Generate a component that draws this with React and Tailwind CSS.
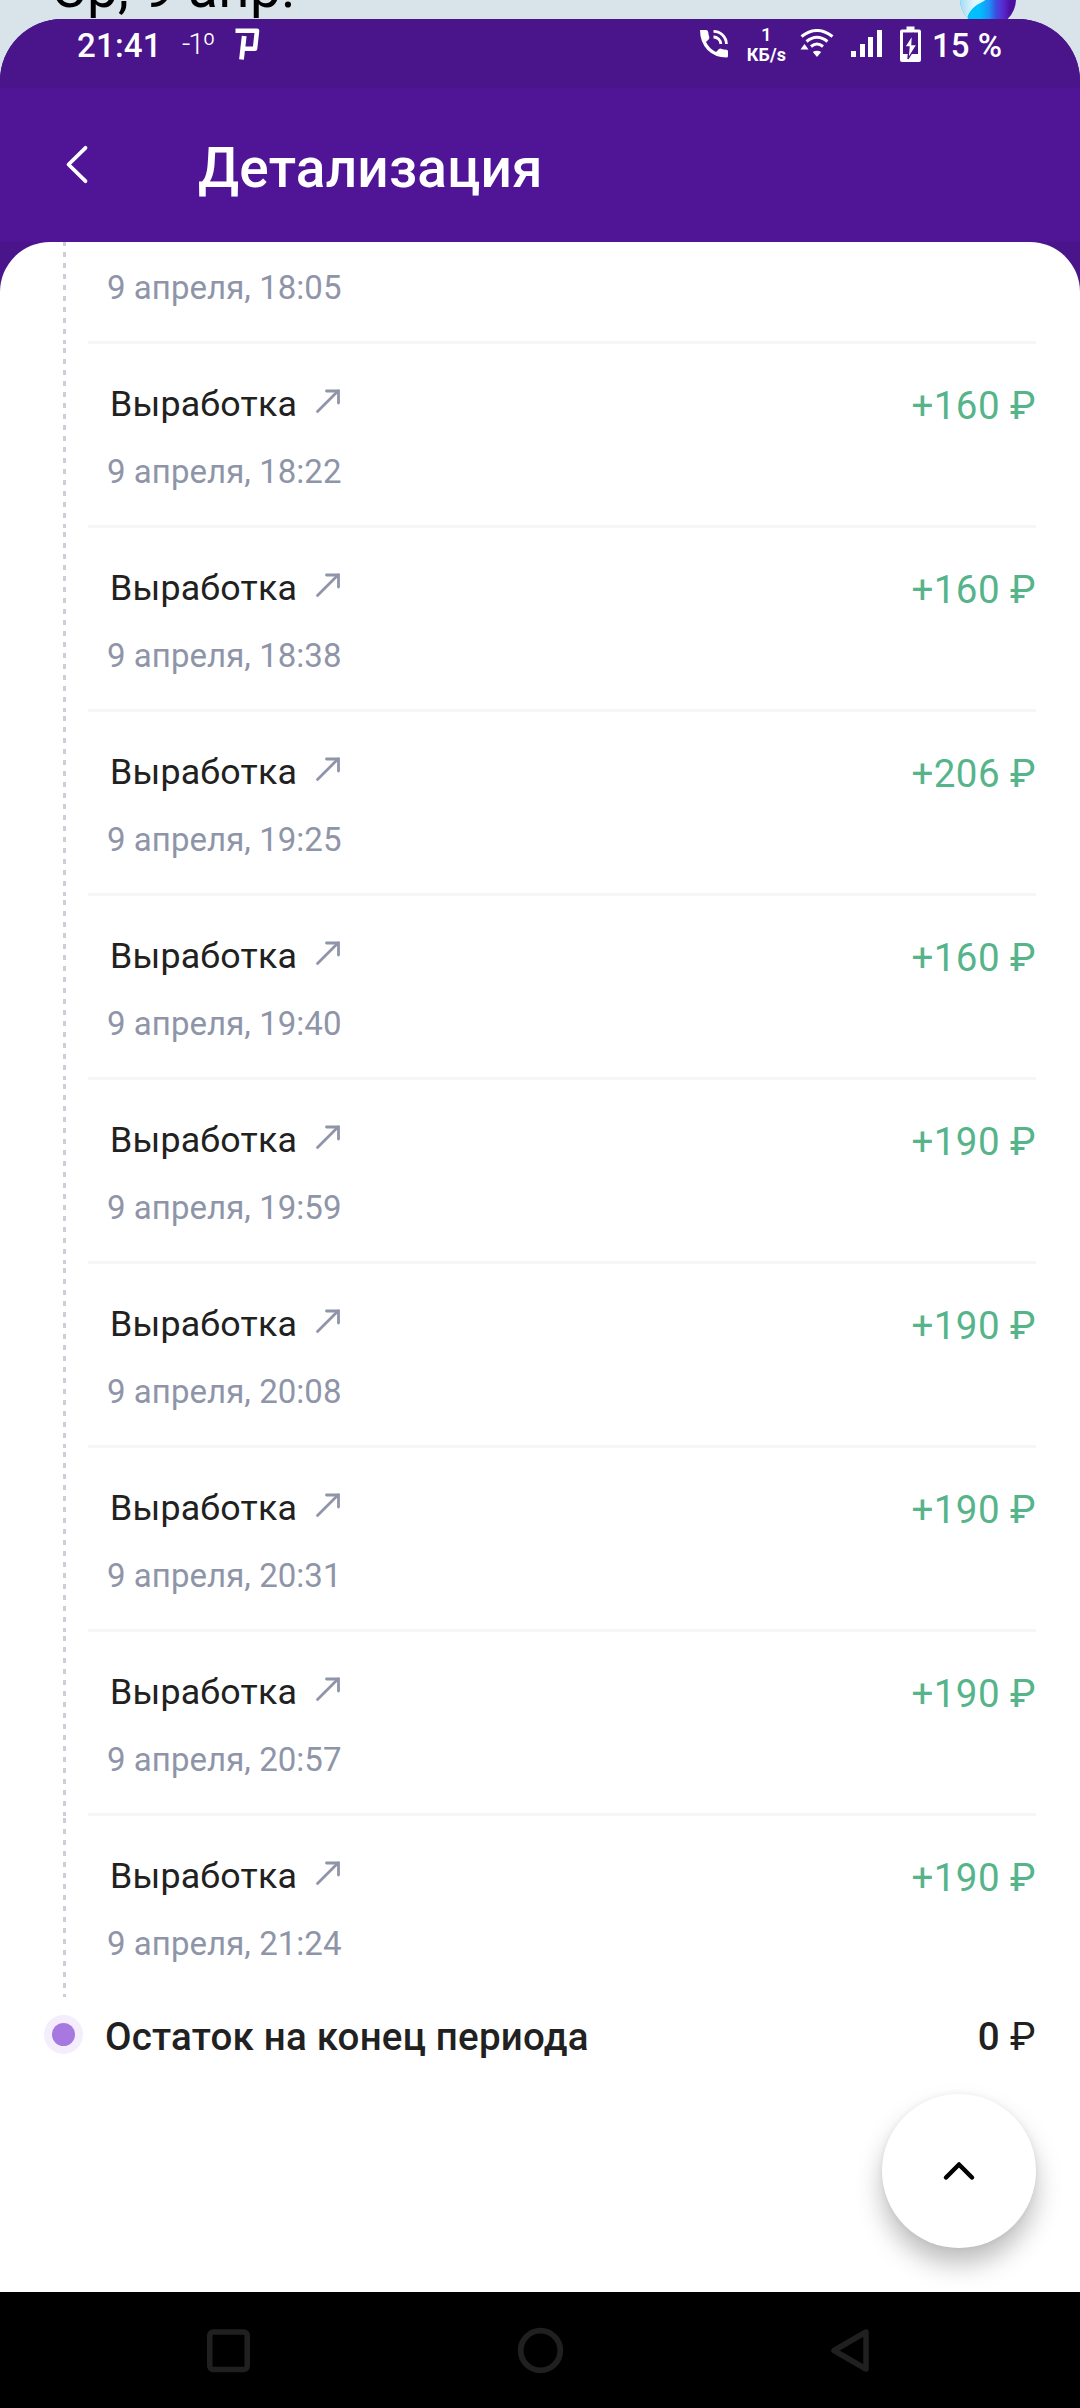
const operations = [
  { time: "9 апреля, 18:05" },
  { time: "9 апреля, 18:22", amount: 160 },
  { time: "9 апреля, 18:38", amount: 160 },
  { time: "9 апреля, 19:25", amount: 206 },
  { time: "9 апреля, 19:40", amount: 160 },
  { time: "9 апреля, 19:59", amount: 190 },
  { time: "9 апреля, 20:08", amount: 190 },
  { time: "9 апреля, 20:31", amount: 190 },
  { time: "9 апреля, 20:57", amount: 190 },
  { time: "9 апреля, 21:24", amount: 190 },
]

function StatusBar() {
  return (
    <div className="h-[69px] shrink-0 bg-[#4a148b] flex items-start text-white">
      <span className="ml-[77px] w-[83px] mt-[7px] text-[33px] leading-[39px] font-medium tracking-[0.2px]">21:41</span>
      <span className="ml-[22px] w-[30px] mt-[6px] text-[29px] leading-[38px] font-light tracking-[-2px] whitespace-nowrap">-1º</span>
      <svg className="ml-[21px] mt-[9px]" width="27" height="33" viewBox="0 0 27 33" fill="none" stroke="#fff">
        <path d="M2.500 2.800 H24 L22 20.800 H11" strokeWidth="4.600" strokeLinejoin="round" />
        <path d="M11.200 8 L8.500 31.500" strokeWidth="4.800" />
      </svg>

      <div className="ml-auto mr-[78px] flex items-start">
        {/* Call */}
        <svg className="mt-[10px]" width="30" height="30" viewBox="0 0 30 30">
          <path
            d="M1 1 H7 Q9 1 9.2 3 Q9.5 6 10.3 8 Q10.7 9.3 9.8 10.2 L7 13 Q10.5 20 17 23 L19.8 20.2 Q20.8 19.3 22 19.7 Q24.5 20.5 27.5 20.7 Q29 20.9 29 22.5 V27 Q29 28.5 27.5 28.5 Q16 28.5 8.5 21 Q1 13 1 1 Z"
            fill="#fff"
          />
          <g fill="none" stroke="#fff" strokeWidth="2.8">
            <path d="M14.5 2.4 A12.8 12.8 0 0 1 27.4 15" />
            <path d="M14.5 8 A7.2 7.2 0 0 1 21.8 15" />
          </g>
        </svg>

        <div className="ml-[16px] mt-[7px] w-[42px] flex flex-col items-center font-medium">
          <span className="text-[19px] leading-[18px]">1</span>
          <span className="mt-px text-[18px] leading-[20px] font-bold tracking-[0.2px] whitespace-nowrap">КБ/s</span>
        </div>

        {/* Wi-Fi */}
        <svg className="ml-[13px] mt-[10px]" width="34" height="29" viewBox="0 0 34 29">
          <g fill="none" stroke="#fff" strokeWidth="3">
            <path d="M1.5 7.5 Q17 -4.5 32.500 7.500" />
            <path d="M6.500 12.500 Q17 4 27.500 12.500" />
            <path d="M11 17.500 Q17 12.500 23 17.500" />
          </g>
          <path d="M17 28 L12.800 23 Q17 20.500 21.200 23 Z" fill="#fff" />
          <path d="M0.500 20.500 L4.500 15 L8.500 20.500 Z" fill="#fff" />
        </svg>

        {/* Signal */}
        <div className="ml-[17px] mt-[11px] h-[27px] flex items-end gap-[3.5px]">
          <div className="w-[5px] h-[6px] bg-white" />
          <div className="w-[5px] h-[13px] bg-white" />
          <div className="w-[5px] h-[20px] bg-white" />
          <div className="w-[5px] h-[27px] bg-white" />
        </div>

        {/* Battery */}
        <svg className="ml-[18px] mt-[7px]" width="21" height="36" viewBox="0 0 21 36">
          <path d="M6.500 0.500 H14.500 V3.500 H19 Q21 3.500 21 5.500 V34 Q21 36 19 36 H2 Q0 36 0 34 V5.500 Q0 3.500 2 3.500 H6.500 Z" fill="#fff" />
          <path d="M3 6.500 H18 V28 H3 Z" fill="#4a148b" />
          <path d="M12.500 8.500 L4.500 21 H9 L8 33 L17 18.500 H12 Z" fill="#fff" stroke="#4a148b" strokeWidth="1.400" />
        </svg>
        <span className="ml-[11px] mt-[7px] text-[33px] leading-[39px] font-medium whitespace-nowrap">15 %</span>
      </div>
    </div>
  )
}

function Header() {
  return (
    <header className="h-[154px] shrink-0 bg-[#501496] flex items-start text-white">
      <svg className="ml-[65px] mt-[56px]" width="24" height="42" viewBox="0 0 24 42" fill="none" stroke="#fff" strokeWidth="3.800" strokeLinecap="round" strokeLinejoin="round">
        <path d="M20.500 3.800 L3.500 20.500 L20.500 37.200" />
      </svg>
      <h1 className="ml-[109px] mt-[48px] text-[55px] leading-[64px] font-medium tracking-[0.2px]">Детализация</h1>
    </header>
  )
}

function Operation({ time, amount, last }) {
  return (
    <div className={last ? "h-[181px] flex" : "h-[184px] flex"}>
      <div
        className={
          last
            ? "ml-[63px] w-[3px] bg-[repeating-linear-gradient(to_bottom,transparent_0px,transparent_2px,#cccfd9_2px,#cccfd9_7px,transparent_7px,transparent_11px)]"
            : "ml-[63px] w-[3px] bg-[repeating-linear-gradient(to_bottom,transparent_0px,transparent_4px,#cccfd9_4px,#cccfd9_9px,transparent_9px,transparent_11px)]"
        }
      />
      <div
        className={
          last
            ? "ml-[22px] w-[948px] flex justify-between"
            : "ml-[22px] w-[948px] flex justify-between border-b-[3px] border-[#f5f6f8]"
        }
      >
        <div className="pt-[39px] flex flex-col">
          <div className="h-[42px] pl-[22px] flex items-start">
            {amount && (
              <>
                <span className="text-[35.75px] leading-[42px] tracking-[0.2px] text-[#212121]">Выработка</span>
                <svg className="ml-[18px] mt-[5px]" width="26" height="26" viewBox="0 0 26 26" fill="none" stroke="#8f95a8" strokeWidth="2.800">
                  <path d="M2.500 23.500 L23 3" strokeLinecap="round" />
                  <path d="M11.500 3 H23.500 V15" strokeLinecap="round" />
                </svg>
              </>
            )}
          </div>
          <span className="mt-[27px] pl-[19px] text-[33px] leading-[39px] tracking-[0.05px] text-[#8f95a8]">{time}</span>
        </div>
        {amount && <span className="mt-[39px] text-[38.5px] leading-[45px] tracking-[0.45px] text-[#56b48a]">+{amount} ₽</span>}
      </div>
    </div>
  )
}

function App() {
  return (
    <div className="relative w-[1080px] h-[2408px] bg-[#d9e4ea] flex flex-col overflow-hidden font-[Roboto,sans-serif]">
      {/* Strip of the home screen above the app */}
      <div className="h-[19px] shrink-0 overflow-hidden flex items-start justify-between">
        <span className="ml-[51px] -mt-[40px] text-[55px] leading-[56px] tracking-[0.2px] text-black">Ср, 9 апр.</span>
        <div className="mr-[64px] -mt-[29px] w-[56px] h-[56px] shrink-0 rounded-full overflow-hidden">
          <svg width="56" height="56" viewBox="0 0 56 56">
            <defs>
              <linearGradient id="globe" x1="0" x2="1" y1="0.600" y2="0.600">
                <stop offset="0.350" stopColor="#00bfff" />
                <stop offset="0.520" stopColor="#1e90f5" />
                <stop offset="0.640" stopColor="#3a50e0" />
                <stop offset="0.760" stopColor="#5a2bd0" />
                <stop offset="0.900" stopColor="#4b0fa0" />
              </linearGradient>
              <linearGradient id="glare" x1="0" x2="1" y1="0" y2="0">
                <stop offset="0" stopColor="#a5dcf3" />
                <stop offset="0.400" stopColor="#e2f7fd" />
              </linearGradient>
            </defs>
            <rect width="56" height="56" fill="url(#globe)" />
            <path d="M0 20 H36 L24 30 Q7 38 7 50 H0 Z" fill="url(#glare)" />
          </svg>
        </div>
      </div>

      <div className="flex-1 min-h-0 rounded-t-[62px] overflow-hidden bg-[#4a148b] flex flex-col">
        <StatusBar />
        <Header />

        <main className="flex-1 min-h-0 rounded-t-[50px] overflow-hidden bg-white">
          <div className="-mt-[82px]">
            {operations.map((operation, index) => (
              <Operation key={operation.time} {...operation} last={index === operations.length - 1} />
            ))}
          </div>

          <div className="mt-[14px] h-[56px] pl-[44px] pr-[44px] flex items-start">
            <div className="mt-[4px] w-[39px] h-[39px] rounded-full bg-[#f4edfc] flex items-center justify-center">
              <div className="w-[23px] h-[23px] rounded-full bg-[#a678e0]" />
            </div>
            <span className="ml-[22px] mt-[3px] text-[38.5px] leading-[45px] font-medium tracking-[0.22px] text-[#212121]">Остаток на конец периода</span>
            <span className="ml-auto mt-[3px] text-[38.5px] leading-[45px] font-medium tracking-[0.4px] text-[#212121]">
              0 <span className="font-normal">₽</span>
            </span>
          </div>

          <button className="block ml-[882px] mt-[27px] w-[154px] h-[154px] rounded-full bg-white shadow-[0_16px_26px_rgba(0,0,0,0.26),0_0_6px_rgba(0,0,0,0.06)]">
            <svg className="mx-auto" width="36" height="24" viewBox="0 0 36 24" fill="none" stroke="#000" strokeWidth="4.500" strokeLinecap="round" strokeLinejoin="round">
              <path d="M5 18.500 L18 5.500 L31 18.500" />
            </svg>
          </button>
        </main>

        <nav className="h-[116px] shrink-0 bg-black flex items-start">
          <svg className="ml-[206px] mt-[37px]" width="44" height="44" viewBox="0 0 44 44" fill="none" stroke="#202020" strokeWidth="5.500">
            <rect x="3.750" y="3" width="37.500" height="37.500" rx="3.500" />
          </svg>
          <svg className="ml-[267px] mt-[35px]" width="47" height="47" viewBox="0 0 47 47" fill="none" stroke="#202020" strokeWidth="5.800">
            <circle cx="23.500" cy="23.500" r="19.800" />
          </svg>
          <svg className="ml-[266px] mt-[37px]" width="40" height="44" viewBox="0 0 40 44" fill="none" stroke="#202020" strokeWidth="5.500" strokeLinejoin="round">
            <path d="M4 21.500 L36 3 V40 Z" />
          </svg>
        </nav>
      </div>
    </div>
  )
}

export default App
